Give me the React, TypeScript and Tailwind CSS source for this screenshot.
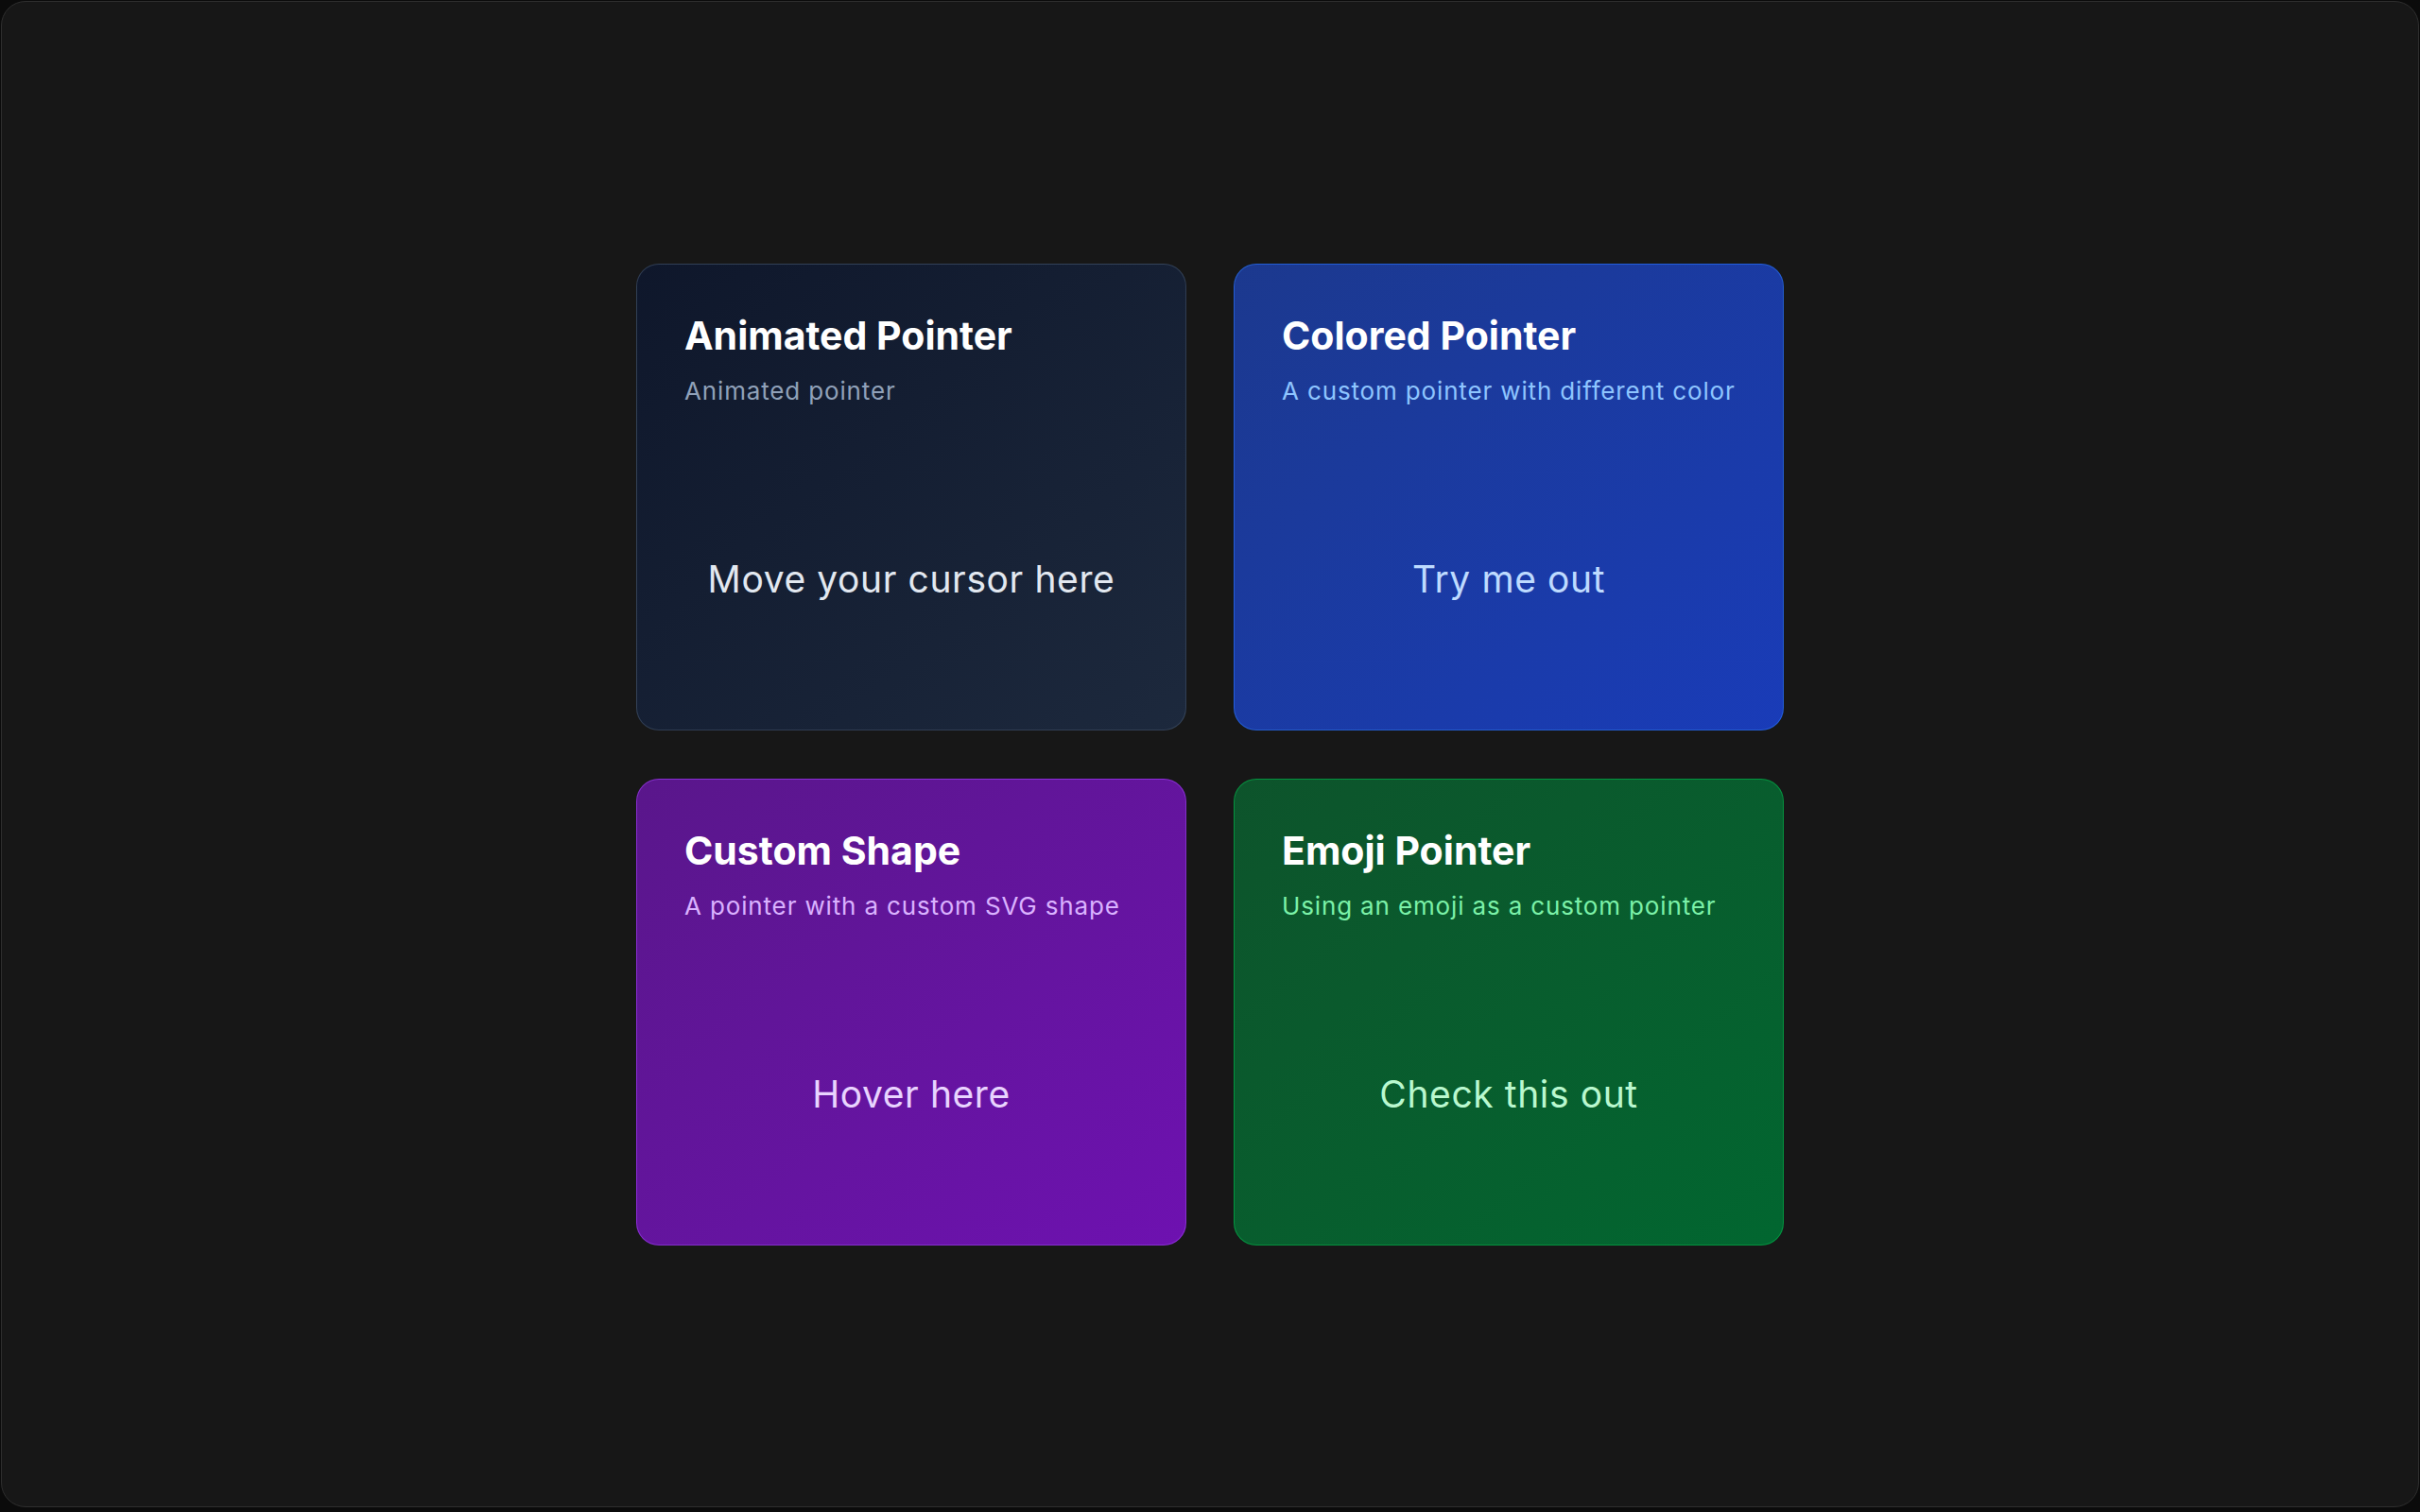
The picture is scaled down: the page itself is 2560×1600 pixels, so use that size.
import React from "react";

const cards = [
  {
    id: "animated",
    title: "Animated Pointer",
    subtitle: "Animated pointer",
    label: "Move your cursor here",
    card: "from-slate-900 to-slate-800 border-slate-600/60",
    sub: "text-slate-400",
    text: "text-slate-200",
  },
  {
    id: "colored",
    title: "Colored Pointer",
    subtitle: "A custom pointer with different color",
    label: "Try me out",
    card: "from-blue-900 to-blue-800 border-blue-500/50",
    sub: "text-blue-300",
    text: "text-blue-200",
  },
  {
    id: "shape",
    title: "Custom Shape",
    subtitle: "A pointer with a custom SVG shape",
    label: "Hover here",
    card: "from-purple-900 to-purple-800 border-purple-500/50",
    sub: "text-purple-300",
    text: "text-purple-200",
  },
  {
    id: "emoji",
    title: "Emoji Pointer",
    subtitle: "Using an emoji as a custom pointer",
    label: "Check this out",
    card: "from-green-900 to-green-800 border-green-500/50",
    sub: "text-green-300",
    text: "text-green-200",
  },
];

export default function App() {
  return (
    <div className="h-[1600px] w-full bg-[#0b0b0b] pl-px pt-px pr-px pb-[5px] font-['Inter',sans-serif]">
      <div className="flex h-full w-full items-center justify-center rounded-[26px] border border-[#2e2e2e] bg-[#171717]">
        <div className="grid grid-cols-2 gap-x-[50px] gap-y-[51px]">
          {cards.map((c) => (
            <div
              key={c.id}
              className={`flex h-[494px] w-[582px] flex-col rounded-[24px] border bg-linear-to-br px-[50px] pt-[50px] pb-[51px] ${c.card}`}
            >
              <h3 className="text-[41px] leading-[50px] font-bold text-white">
                {c.title}
              </h3>
              <p className={`mt-[18px] whitespace-nowrap text-[26px] leading-[31px] tracking-[0.85px] ${c.sub}`}>
                {c.subtitle}
              </p>
              <div className="flex flex-1 items-center justify-center pt-[75px]">
                <span className={`whitespace-nowrap text-[39px] leading-[47px] tracking-[0.6px] ${c.text}`}>
                  {c.label}
                </span>
              </div>
            </div>
          ))}
        </div>
      </div>
    </div>
  );
}
